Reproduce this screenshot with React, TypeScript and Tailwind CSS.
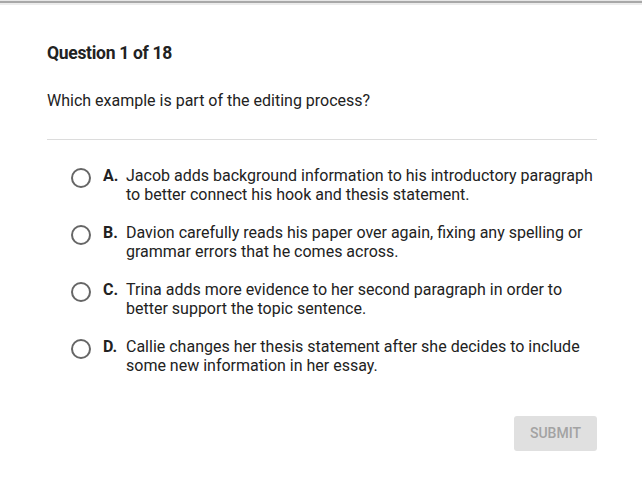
import React from 'react'

const options = [
  { letter: 'A.', text: 'Jacob adds background information to his introductory paragraph to better connect his hook and thesis statement.' },
  { letter: 'B.', text: 'Davion carefully reads his paper over again, fixing any spelling or grammar errors that he comes across.' },
  { letter: 'C.', text: 'Trina adds more evidence to her second paragraph in order to better support the topic sentence.' },
  { letter: 'D.', text: 'Callie changes her thesis statement after she decides to include some new information in her essay.' },
]

export default function App() {
  return (
    <div className="w-[642px] h-[496px] bg-white text-[#222] font-['Roboto','Liberation_Sans',sans-serif]">
      <div className="h-[1px] bg-[#e6e6e6]" />
      <div className="h-[2px] bg-[#a8a8a8]" />
      <div className="h-[2px] bg-[#ececec]" />
      <div className="px-[47px] pt-[38px]">
        <h1 className="text-[17.5px] font-bold leading-[20px] tracking-[-0.3px]">Question 1 of 18</h1>
        <p className="mt-[28px] text-[16px] leading-[20px]">Which example is part of the editing process?</p>
        <div className="mt-[28px] h-px bg-[#dcdcdc] w-[550px]" />
        <ul className="mt-[26px] space-y-[19px] pl-[24px]">
          {options.map(o => (
            <li key={o.letter} className="flex items-start">
              <span className="mt-[2px] w-[20px] h-[20px] rounded-full border-2 border-[#666] shrink-0" />
              <span className="ml-[12px] w-[23px] shrink-0 font-bold text-[16px] leading-[19px]">{o.letter}</span>
              <span className="w-[475px] text-[16px] leading-[19px]">{o.text}</span>
            </li>
          ))}
        </ul>
        <div className="flex justify-end mt-[41px] w-[550px]">
          <button className="w-[83px] h-[35px] rounded-[3px] bg-[#e0e0e0] text-[#a3a3a3] text-[14px] font-medium">SUBMIT</button>
        </div>
      </div>
    </div>
  )
}
